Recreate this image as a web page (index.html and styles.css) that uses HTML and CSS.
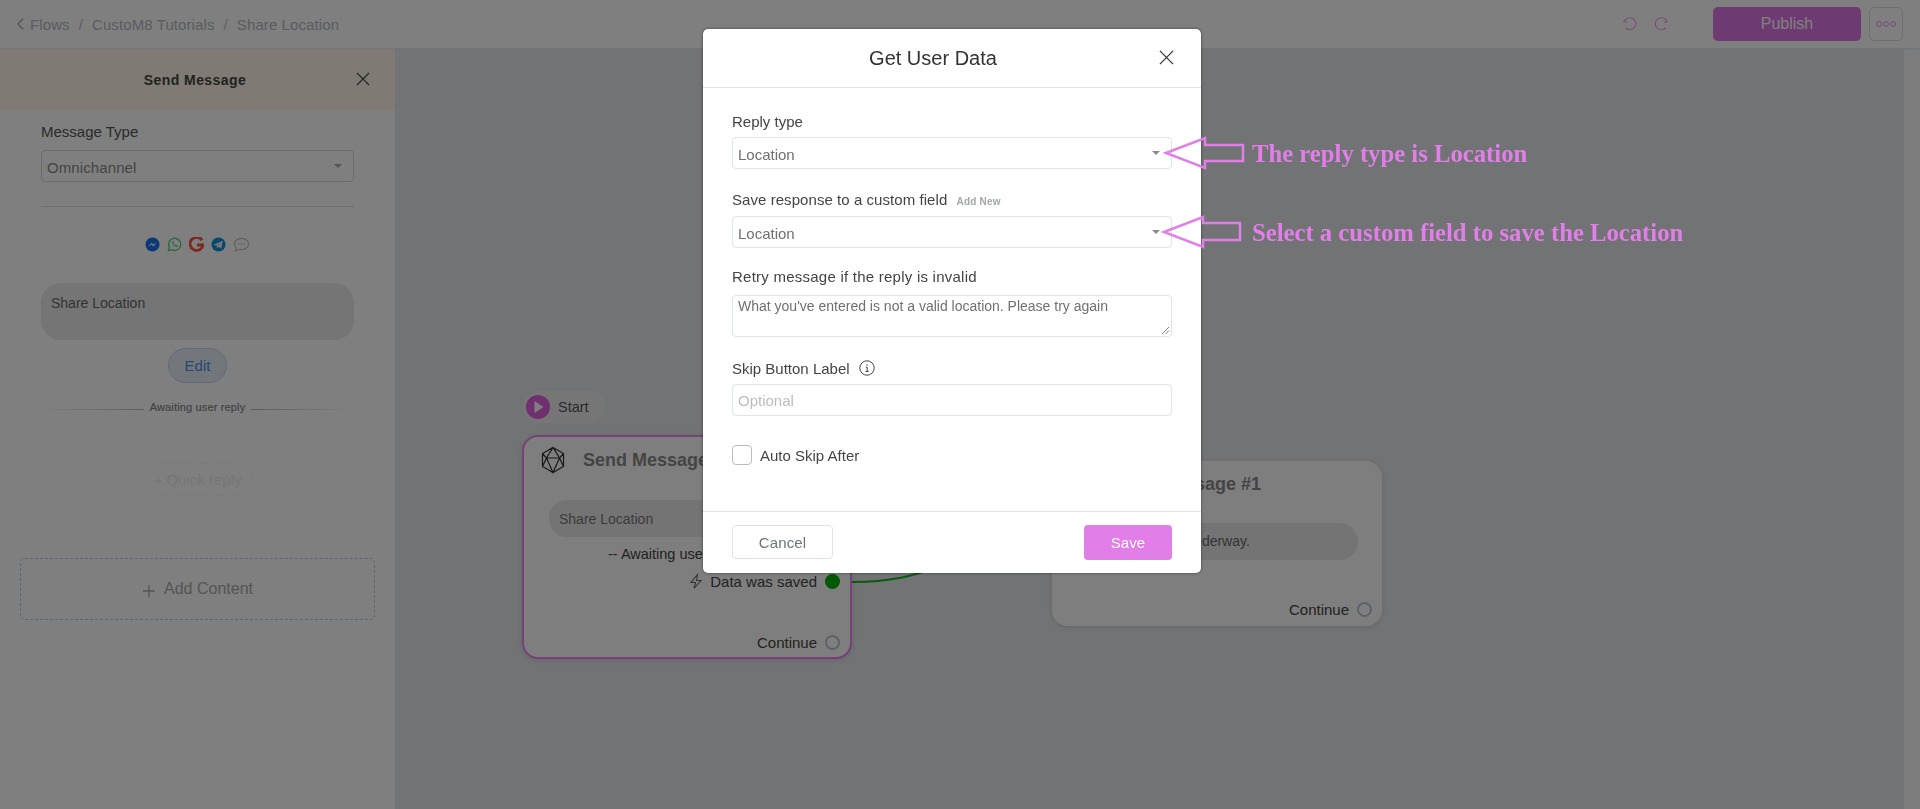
FILE: index.html
```html
<!DOCTYPE html>
<html lang="en">
<head>
<meta charset="utf-8">
<title>Share Location</title>
<link rel="stylesheet" href="styles.css">
</head>
<body>
<div class="app">
  <header class="topbar">
    <nav class="crumbs">
      <svg class="back" viewBox="0 0 10 16"><path d="M8 2 2 8l6 6"/></svg>
      <span>Flows</span><span class="sep">/</span><span>CustoM8 Tutorials</span><span class="sep">/</span><span>Share Location</span>
    </nav>
    <div class="actions">
      <svg class="hist" viewBox="0 0 16 16"><path d="M4 2.500 1.800 5.600l3.600.6M2.200 5.400A6 6 0 1 1 3.500 12"/></svg>
      <svg class="hist" viewBox="0 0 16 16"><path d="M12 2.500l2.200 3.100-3.600.6M13.800 5.400A6 6 0 1 0 12.500 12"/></svg>
      <button class="publish">Publish</button>
      <button class="more"><i></i><i></i><i></i></button>
    </div>
  </header>
  <div class="main">
    <aside class="side">
      <div class="side-head"><b>Send Message</b>
        <svg class="x" viewBox="0 0 14 14"><path d="M1 1l12 12M13 1 1 13"/></svg>
      </div>
      <div class="side-body">
        <div class="lbl">Message Type</div>
        <div class="sel"><span>Omnichannel</span><i class="caret"></i></div>
        <hr class="rule">
        <div class="channels">
          <svg viewBox="0 0 16 16"><circle cx="8" cy="8" r="7.500" fill="#1a70f0"/><path d="M3.500 10 7 6l2 2 3.500-2-3.500 4-2-2z" fill="#fff"/></svg>
          <svg viewBox="0 0 16 16"><path d="M1.500 14.500l1-3.500a6.500 6.500 0 1 1 2.500 2.500z" fill="none" stroke="#5ed080" stroke-width="1.500"/><path d="M5.500 5c0 3 2.500 5.500 5.500 5.500l.5-1.500-2-.8-.8.800-2-2 .8-.8L6.800 4.500z" fill="#5ed080"/></svg>
          <svg viewBox="0 0 16 16"><path d="M14 3.500A7 7 0 1 0 15 8.500H8.500" fill="none" stroke="#ff5040" stroke-width="3"/></svg>
          <svg viewBox="0 0 16 16"><circle cx="8" cy="8" r="7.500" fill="#1090d8"/><path d="M3 8l9.500-4-1.500 8.500-3-2-1.500 1.500-.5-2.500L11 6l-5.500 3.300z" fill="#eee"/></svg>
          <svg viewBox="0 0 18 16"><path d="M9 1.500c4.200 0 7.500 2.700 7.500 6S13.200 13.500 9 13.500c-1 0-2-.2-2.900-.4L2.500 15l.7-3.300C2 10.500 1.500 9.100 1.500 7.500c0-3.300 3.300-6 7.500-6z" fill="none" stroke="#c0c0c0" stroke-width="1.300"/><circle cx="6" cy="7.500" r=".9" fill="#c0c0c0"/><circle cx="9" cy="7.500" r=".9" fill="#c0c0c0"/><circle cx="12" cy="7.500" r=".9" fill="#c0c0c0"/></svg>
        </div>
        <div class="bubble-lg">Share Location</div>
        <button class="edit">Edit</button>
        <div class="await"><i class="fade-l"></i><span>Awaiting user reply</span><i class="fade-r"></i></div>
        <div class="quick">+ Quick reply</div>
      </div>
      <div class="add"><svg viewBox="0 0 14 14"><path d="M7 1v12M1 7h12"/></svg><span>Add Content</span></div>
    </aside>
    <section class="canvas">
      <svg class="wire" viewBox="0 0 400 60"><path d="M0 22c40 0 60-6 90-16 30-10 60-6 110-6"/></svg>
      <div class="start">
        <span class="play"><svg viewBox="0 0 24 24"><path d="M8.500 6v12l9-6z"/></svg></span><span>Start</span>
      </div>
      <article class="node node-a">
        <div class="node-head">
          <svg class="poly" viewBox="0 0 26 28"><path d="M13 1.500 23.500 7.500v13L13 26.500 2.500 20.500v-13zM13 1.500 6.500 12h13zM2.500 7.500 6.500 12 13 26.500 19.500 12l4-4.500M2.500 20.500 6.500 12M23.500 20.500 19.500 12"/></svg>
          <h3>Send Message</h3>
        </div>
        <div class="bubble">Share Location</div>
        <div class="await-line">-- Awaiting user reply --</div>
        <div class="port saved">
          <svg class="bolt" viewBox="0 0 14 16"><path d="M8.500 1 2 9h4.500L5 15l7-8H7.500z"/></svg>
          <span>Data was saved</span><i class="dot"></i>
        </div>
        <div class="port cont"><span>Continue</span><i class="ring"></i></div>
      </article>
      <article class="node node-b">
        <div class="node-head plain"><h3>Send Message #1</h3></div>
        <div class="bubble">Your delivery is underway.</div>
        <div class="port cont"><span>Continue</span><i class="ring"></i></div>
      </article>
    </section>
    <div class="scroll-strip"></div>
  </div>
</div>
<div class="overlay"></div>
<div class="modal">
  <div class="modal-head"><h2>Get User Data</h2>
    <svg class="x2" viewBox="0 0 16 16"><path d="M1 1l14 14M15 1 1 15"/></svg>
  </div>
  <div class="modal-body">
    <label class="f-lbl l1">Reply type</label>
    <div class="f-sel"><span>Location</span><i class="caret"></i></div>
    <label class="f-lbl l2">Save response to a custom field <small>Add New</small></label>
    <div class="f-sel"><span>Location</span><i class="caret"></i></div>
    <label class="f-lbl l3">Retry message if the reply is invalid</label>
    <div class="f-area">What you've entered is not a valid location. Please try again
      <svg class="grip" viewBox="0 0 10 10"><path d="M9 1 1 9M9 5 5 9"/></svg>
    </div>
    <label class="f-lbl l4">Skip Button Label
      <svg class="info" viewBox="0 0 16 16"><circle cx="8" cy="8" r="7.200"/><path d="M6.800 7.200H8.200V11.500M6.500 11.500h3.200M8 4.300v1.400"/></svg>
    </label>
    <div class="f-inp">Optional</div>
    <div class="chk"><i></i><span>Auto Skip After</span></div>
  </div>
  <div class="modal-foot">
    <button class="cancel">Cancel</button>
    <button class="save">Save</button>
  </div>
</div>
<svg class="anno-arrow a1" viewBox="0 0 77 30"><path d="M0 15 39 0v7h38v16H39v7z"/></svg>
<svg class="anno-arrow a2" viewBox="0 0 77 30"><path d="M0 15 39 0v6h37v17H39v7z"/></svg>
<div class="anno t1">The reply type is Location</div>
<div class="anno t2">Select a custom field to save the Location</div>
</body>
</html>
```
FILE: styles.css
```css
* { box-sizing: border-box; }
html, body { margin: 0; height: 100%; overflow: hidden; }
body { font-family: "Liberation Sans", Arial, sans-serif; font-size: 14px; color: #555; background: #e4e6ea; }
button { font-family: inherit; }
.app { height: 809px; display: flex; flex-direction: column; }
.topbar { height: 48px; flex: none; background: #fff; display: flex; align-items: center; justify-content: space-between; padding: 0 17px 0 16px; box-shadow: 0 1px 3px rgba(0,0,0,.12); position: relative; }
.crumbs { display: flex; align-items: center; color: #b4b9be; font-size: 15px; letter-spacing: .1px; }
.back { width: 9px; height: 14px; margin-right: 5px; fill: none; stroke: #a4a8ac; stroke-width: 1.600; }
.sep { margin: 0 9px; color: #b8bcc0; }
.actions { display: flex; align-items: center; }
.hist { width: 16px; height: 16px; margin-right: 15px; fill: none; stroke: #f0a0f0; stroke-width: 1.100; }
.hist + .hist { margin-right: 44px; }
.publish { width: 148px; height: 34px; border: 0; border-radius: 5px; background: #dd75e5; color: #fff; font-size: 16px; }
.more { width: 34px; height: 34px; margin-left: 8px; border: 1px solid #dcdcdc; border-radius: 5px; background: #fff; display: flex; align-items: center; justify-content: center; gap: 1px; padding: 0; }
.more i { width: 6px; height: 6px; border-radius: 50%; border: 1.500px solid #f090f0; }
.main { flex: 1; display: flex; min-height: 0; }
.side { width: 395px; flex: none; background: #fff; padding-top: 2px; display: flex; flex-direction: column; }
.side-head { height: 60px; flex: none; background: #fef6e8; display: flex; align-items: center; justify-content: center; position: relative; font-size: 14px; color: #444; }
.side-head b { margin-right: 5px; letter-spacing: .45px; }
.x { position: absolute; left: 356px; top: 22px; width: 14px; height: 14px; stroke: #444; stroke-width: 1.100; fill: none; }
.side-body { padding: 13px 41px 0; display: flex; flex-direction: column; }
.lbl { font-size: 15px; line-height: 18px; color: #555; }
.sel { height: 32px; margin-top: 9px; border: 1px solid #d8d8d8; border-radius: 4px; display: flex; align-items: center; justify-content: space-between; padding: 0 11px 0 5px; font-size: 15px; letter-spacing: .1px; color: #888; }
.sel span { position: relative; top: 1px; }
.caret { width: 0; height: 0; border-left: 4px solid transparent; border-right: 4px solid transparent; border-top: 4.500px solid #aaa; }
.rule { width: 100%; margin: 24px 0 0; border: 0; border-top: 1px solid #d8dee4; }
.channels { display: flex; justify-content: center; gap: 7px; margin-top: 30px; height: 16px; }
.channels svg { width: 15px; height: 15px; display: block; }
.channels svg:last-child { width: 17px; }
.bubble-lg { height: 57px; margin-top: 30px; background: #eaeaea; border-radius: 20px; padding: 12px 10px; font-size: 14px; color: #666; }
.edit { align-self: center; width: 59px; height: 35px; margin-top: 8px; border: 1px solid #bcd6f4; border-radius: 18px; background: #e6eef8; color: #4a8fe8; font-size: 15px; padding: 0; }
.await { display: flex; align-items: center; margin-top: 17px; height: 14px; gap: 6px; font-size: 11px; color: #888; letter-spacing: .15px; }
.await span { flex: none; white-space: nowrap; -webkit-text-stroke: .2px #888; }
.await i { flex: 1; height: 1px; position: relative; top: 2px; }
.fade-l { background: linear-gradient(90deg, rgba(180,180,180,0), #bbb); }
.fade-r { background: linear-gradient(90deg, #bbb, rgba(180,180,180,0)); }
.quick { align-self: center; width: 110px; height: 33px; margin-top: 49px; border: 1px dashed #f6f6f6; border-radius: 17px; color: #ededed; font-size: 15px; line-height: 31px; text-align: center; }
.add { margin: 62px 20px 0; height: 62px; border: 1px dashed #b6cfe8; border-radius: 5px; display: flex; align-items: center; justify-content: center; gap: 8px; font-size: 16px; color: #aaa; padding-bottom: 1px; }
.add svg { width: 14px; height: 14px; stroke: #aaa; stroke-width: 1.300; fill: none; position: relative; top: 2px; }
.canvas { flex: 1; position: relative; background: #e4e6ea; }
.scroll-strip { width: 16px; flex: none; background: #fafbfd; }
.wire { position: absolute; left: 457px; top: 512px; width: 400px; height: 60px; fill: none; stroke: #14b414; stroke-width: 2; overflow: visible; }
.start { position: absolute; left: 128px; top: 343px; width: 83px; height: 32px; border-radius: 16px; background: #ececee; display: flex; align-items: center; gap: 8px; padding-left: 3px; color: #555; font-size: 14.500px; }
.play { width: 24px; height: 24px; border-radius: 50%; background: #e060e0; display: block; }
.play svg { display: block; width: 24px; height: 24px; fill: #fff; }
.node { position: absolute; background: #fdfdfd; border-radius: 16px; box-shadow: 0 1px 5px rgba(0,0,0,.12); }
.node h3 { margin: 0; font-size: 18px; line-height: 22px; color: #888; font-weight: 700; white-space: nowrap; }
.node-a { left: 127px; top: 387px; width: 330px; height: 224px; border: 2px solid #f080f0; }
.node-b { left: 657px; top: 413px; width: 330px; height: 165px; }
.node-head { display: flex; align-items: center; }
.node-a .node-head { padding: 8px 0 0 16px; height: 37px; }
.poly { width: 26px; height: 28px; fill: none; stroke: #333; stroke-width: 1.200; margin-right: 17px; flex: none; }
.plain { padding: 12px 0 0 59px; }
.bubble { background: #e9e9e9; border-radius: 18px; height: 37px; line-height: 37px; padding-left: 10px; margin: 0 24px; white-space: nowrap; font-size: 14px; color: #777; }
.node-a .bubble { margin: 26px 24px 0 25px; line-height: 39px; }
.node-b .bubble { margin-top: 28px; padding-left: 12px; color: #666; }
.await-line { margin: 7px 0 0 84px; height: 20px; line-height: 20px; font-size: 14.500px; color: #444; white-space: nowrap; }
.port { display: flex; align-items: center; justify-content: flex-end; font-size: 15px; color: #444; gap: 8px; }
.node-a .port { padding-right: 10px; }
.node-b .port { padding-right: 10px; }
.saved { margin-top: 7px; height: 20px; }
.node-a .cont { margin-top: 41px; height: 20px; }
.node-b .cont { margin-top: 39px; height: 20px; }
.bolt { width: 14px; height: 17px; fill: none; stroke: #666; stroke-width: 1.100; margin-right: -1px; }
.dot { width: 15px; height: 15px; border-radius: 50%; background: #00b000; flex: none; }
.ring { width: 15px; height: 15px; border-radius: 50%; border: 2px solid #b8c2d6; flex: none; background: #fff; }
.overlay { position: fixed; inset: 0; background: rgba(0,0,0,.5); }
.modal { position: absolute; left: 703px; top: 29px; width: 498px; height: 544px; background: #fff; border-radius: 5px; box-shadow: 0 0 3px rgba(0,0,0,.5); display: flex; flex-direction: column; }
.modal-head { height: 59px; flex: none; border-bottom: 1px solid #dee2e6; display: flex; align-items: center; justify-content: center; position: relative; padding-right: 38px; }
.modal-head h2 { margin: 0; font-weight: 400; font-size: 20px; color: #333; }
.x2 { position: absolute; left: 456px; top: 21px; width: 15px; height: 15px; stroke: #333; stroke-width: 1.300; fill: none; }
.modal-body { flex: 1; padding: 0 29px; }
.f-lbl { display: block; font-size: 15px; line-height: 18px; color: #444; }
.l1 { margin-top: 25px; height: 24px; }
.l2 { margin-top: 22px; height: 25px; letter-spacing: .06px; }
.l2 small { font-size: 10px; font-weight: 700; color: #a3a6a9; margin-left: 5px; letter-spacing: .2px; }
.l3 { margin-top: 20px; height: 27px; letter-spacing: .24px; }
.l4 { margin-top: 23px; height: 24px; display: flex; align-items: flex-start; gap: 9px; }
.f-sel, .f-inp { height: 32px; border: 1px solid #dfe4ee; border-radius: 4px; display: flex; align-items: center; padding: 0 5px; font-size: 15px; color: #707070; }
.f-sel { justify-content: space-between; padding-right: 11px; }
.f-sel span { position: relative; top: 1px; }
.f-sel .caret { border-top-color: #8a8a8a; }
.f-inp { color: #bcbcbc; }
.f-area { height: 42px; border: 1px solid #dfe4ee; border-radius: 4px; padding: 2px 5px; font-size: 14px; line-height: 17px; color: #707070; position: relative; white-space: nowrap; }
.grip { position: absolute; right: 1px; bottom: 1px; width: 9px; height: 9px; stroke: #555; stroke-width: .8; fill: none; }
.info { width: 16px; height: 16px; fill: none; stroke: #444; stroke-width: 1; }
.chk { display: flex; align-items: center; gap: 8px; margin-top: 29px; font-size: 15px; color: #444; }
.chk i { width: 20px; height: 20px; border: 1px solid #b9bdc2; border-radius: 4px; }
.modal-foot { height: 62px; flex: none; border-top: 1px solid #dee2e6; display: flex; align-items: flex-start; justify-content: space-between; padding: 13px 29px 0; }
.cancel { width: 101px; height: 34px; border: 1px solid #dfe3e8; border-radius: 4px; background: #fff; color: #6c757d; font-size: 15px; letter-spacing: .1px; }
.save { width: 88px; height: 35px; border: 0; border-radius: 4px; background: #e17ee8; color: #fff; font-size: 15px; letter-spacing: .1px; }
.anno-arrow { position: absolute; width: 77px; height: 30px; fill: none; stroke: #e17ee8; stroke-width: 2.500; overflow: visible; }
.a1 { left: 1166px; top: 138px; }
.a2 { left: 1164px; top: 217px; }
.anno { position: absolute; left: 1252px; font-family: "Liberation Serif", serif; font-weight: 700; font-size: 24.700px; line-height: 30px; color: #e17ee8; white-space: nowrap; }
.t1 { top: 139px; }
.t2 { top: 218px; }
```
